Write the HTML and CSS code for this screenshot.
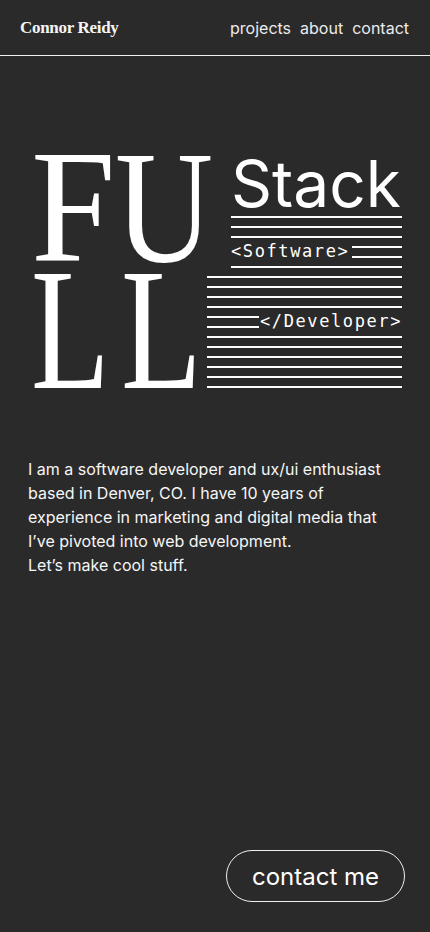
FILE: index.html
```html
<!DOCTYPE html>
<html lang="en">
<head>
<meta charset="utf-8">
<meta name="viewport" content="width=device-width, initial-scale=1">
<title>Connor Reidy</title>
<link rel="stylesheet" href="styles.css">
</head>
<body>
<header class="topbar">
  <div class="brand">Connor Reidy</div>
  <nav class="nav">
    <a href="#projects">projects</a>
    <a href="#about">about</a>
    <a href="#contact">contact</a>
  </nav>
</header>
<main class="page">
  <section class="hero">
    <div class="big big-fu"><span class="g g-f">F</span><span class="g g-u">U</span></div>
    <div class="stack-block">
      <div class="stack-word">Stack</div>
      <div class="ln"></div>
      <div class="ln"></div>
      <div class="ln"></div>
      <div class="code-row">
        <span class="code">&lt;Software&gt;</span>
        <div class="short short-right"><div class="ln"></div><div class="ln"></div></div>
      </div>
      <div class="ln"></div>
    </div>
    <div class="big big-ll"><span class="g g-l1">L</span><span class="g g-l2">L</span></div>
    <div class="lines-block">
      <div class="ln"></div>
      <div class="ln"></div>
      <div class="ln"></div>
      <div class="ln"></div>
      <div class="code-row">
        <div class="short short-left"><div class="ln"></div><div class="ln"></div></div>
        <span class="code code-dev">&lt;/Developer&gt;</span>
      </div>
      <div class="ln"></div>
      <div class="ln"></div>
      <div class="ln"></div>
      <div class="ln"></div>
      <div class="ln"></div>
      <div class="ln"></div>
    </div>
  </section>
  <p class="intro">I am a software developer and ux/ui enthusiast based in Denver, CO. I have 10 years of experience in marketing and digital media that I’ve pivoted into web development.<br>Let’s make cool stuff.</p>
  <a class="cta" href="#contact">contact me</a>
</main>
</body>
</html>
```
FILE: styles.css
```css
html, body {
  margin: 0;
  padding: 0;
  background: #2a2a2a;
  color: #ffffff;
}

body {
  font-family: Inter, "Noto Sans", sans-serif;
}

.topbar {
  height: 56px;
  box-sizing: border-box;
  display: flex;
  align-items: center;
  justify-content: space-between;
  padding: 0 21px 0 20px;
  border-bottom: 1px solid #f2f2f2;
}

.brand {
  font-family: "Liberation Serif", serif;
  font-weight: 700;
  font-size: 17px;
  letter-spacing: -0.3px;
  color: #f4f4f4;
}

.nav {
  display: flex;
  gap: 9px;
}

.nav a {
  color: #ececec;
  text-decoration: none;
  font-size: 16px;
}

.page {
  display: flex;
  flex-direction: column;
  min-height: calc(100vh - 56px);
  box-sizing: border-box;
  padding-bottom: 30px;
}

.hero {
  margin-top: 102.5px;
  padding: 0 28px 0 31px;
  display: grid;
  grid-template-columns: 176px 24px 171px;
  row-gap: 7.5px;
  align-items: start;
}

.big {
  font-family: "Liberation Serif", serif;
  font-weight: 400;
  white-space: nowrap;
  color: #ffffff;
}

.g {
  display: inline-block;
  transform-origin: left center;
}

.big-fu {
  grid-column: 1 / 3;
  grid-row: 1;
  font-size: 160px;
  line-height: 96.8px;
  height: 96.8px;
}

.g-f {
  transform: scaleX(0.95);
  margin-right: -5px;
}

.g-u {
  transform: scaleX(0.85);
}

.big-ll {
  grid-column: 1 / 2;
  grid-row: 2;
  font-size: 174px;
  line-height: 108px;
  height: 108px;
}

.g-l1 {
  transform: scaleX(0.74);
  margin-right: -16px;
}

.g-l2 {
  transform: scaleX(0.76);
}

.stack-block {
  grid-column: 3 / 4;
  grid-row: 1;
  display: flex;
  flex-direction: column;
  gap: 7.5px;
}

.stack-word {
  font-family: Inter, sans-serif;
  font-size: 64px;
  line-height: 49.5px;
  height: 49.5px;
}

.lines-block {
  grid-column: 2 / 4;
  grid-row: 2;
  display: flex;
  flex-direction: column;
  gap: 7.5px;
}

.ln {
  height: 2.5px;
  background: #ffffff;
}

.code-row {
  display: flex;
  align-items: flex-start;
}

.code {
  font-family: "DejaVu Sans Mono", "Liberation Mono", monospace;
  font-size: 17px;
  line-height: 10px;
  letter-spacing: 1.6px;
  white-space: nowrap;
}

.code-dev {
  margin-left: 1px;
}

.short {
  flex: 1;
  display: flex;
  flex-direction: column;
  gap: 7.5px;
}

.short-right {
  margin-left: 2.5px;
}

.intro {
  margin: 69px 28px 0 28px;
  font-size: 16px;
  line-height: 24px;
  color: #f6f6f6;
}

.cta {
  margin-top: auto;
  align-self: flex-end;
  margin-right: 25px;
  height: 52px;
  box-sizing: border-box;
  display: inline-flex;
  align-items: center;
  padding: 0 25px;
  border: 1px solid #f0f0f0;
  border-radius: 26px;
  color: #ffffff;
  text-decoration: none;
  font-size: 24px;
}
```
